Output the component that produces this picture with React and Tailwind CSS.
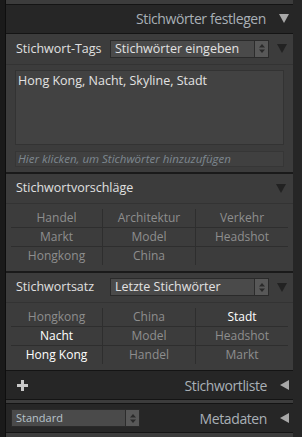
import React from "react";

const font = { fontFamily: '"Open Sans", "Noto Sans", Arial, sans-serif' };

const DownTri = ({ color = "#1c1c1c" }) => (
  <svg width="10" height="9" viewBox="0 0 10 9">
    <polygon points="0,0 10,0 5,9" fill={color} />
  </svg>
);

const LeftTri = () => (
  <svg width="9" height="10" viewBox="0 0 9 10">
    <polygon points="9,0 9,10 0,5" fill="#a8a8a8" />
  </svg>
);

const Spinner = () => (
  <div className="w-[14px] h-full bg-[#585858] border-l border-[#2c2c2c] flex items-center justify-center">
    <svg width="6" height="9" viewBox="0 0 6 9">
      <polygon points="0,3.5 6,3.5 3,0" fill="#2a2a2a" />
      <polygon points="0,5.5 6,5.5 3,9" fill="#2a2a2a" />
    </svg>
  </div>
);

const Select = ({ label, w = "w-[159px]", small }) => (
  <div className={`${w} h-[18px] flex bg-[#4a4a4a] border border-[#2a2a2a]`}>
    <div className={`flex-1 flex items-center pl-[4px] ${small ? "text-[11px] text-[#b8c4cc]" : "text-[12.5px] text-[#e2e2e2]"}`}>
      {label}
    </div>
    <Spinner />
  </div>
);

const Grid = ({ items }) => (
  <div className="mx-[5px] grid grid-cols-[92px_93px_92px] mt-[5px]">
    {items.map((it, i) => {
      const col = i % 3;
      const row = Math.floor(i / 3);
      return (
        <div
          key={i}
          className={`flex items-center justify-center text-[12px] ${
            col < 2 ? "border-r border-[#2e2e2e]" : ""
          } ${row < 2 ? "h-[19px] border-b border-[#2e2e2e]" : "h-[18px]"} ${
            it.hi ? "text-white" : "text-[#8e8e8e]"
          }`}
        >
          {it.t}
        </div>
      );
    })}
  </div>
);

const sug = [
  { t: "Handel" }, { t: "Architektur" }, { t: "Verkehr" },
  { t: "Markt" }, { t: "Model" }, { t: "Headshot" },
  { t: "Hongkong" }, { t: "China" }, { t: "" },
];

const satz = [
  { t: "Hongkong" }, { t: "China" }, { t: "Stadt", hi: true },
  { t: "Nacht", hi: true }, { t: "Model" }, { t: "Headshot" },
  { t: "Hong Kong", hi: true }, { t: "Handel" }, { t: "Markt" },
];

export default function App() {
  return (
    <div className="w-[302px] h-[437px] overflow-hidden bg-[#262626] flex" style={font}>
      <div className="w-[6px] bg-[#1a1a1a] border-r border-[#0e0e0e]"></div>
      <div className="w-[287px] flex flex-col">
        <div className="h-[5px] bg-[#3c3c3c] border-b border-[#141414]"></div>
        <div className="h-[28px] flex items-center justify-end pr-[4px] gap-[13px]">
          <span className="text-[14px] tracking-[-0.4px] text-[#a9b0b6]">Stichwörter festlegen</span>
          <DownTri color="#a8a8a8" />
        </div>
        <div className="h-[339px] bg-[#3c3c3c] border-t border-b border-[#141414] flex flex-col">
          <div className="h-[31px] flex items-center pl-[10px] border-b border-[#333333]">
            <span className="w-[94px] text-[12.5px] text-[#e0e0e0]">Stichwort-Tags</span>
            <Select label="Stichwörter eingeben" />
            <div className="ml-[8px]"><DownTri color="#222222" /></div>
          </div>
          <div className="mx-[9px] mt-[5px] h-[75px] bg-[#424242] border border-[#333333] px-[2px] pt-[1px] text-[12.5px] text-[#e2e2e2]">
            Hong Kong, Nacht, Skyline, Stadt
          </div>
          <div className="mx-[9px] mt-[6px] h-[16px] bg-[#404040] border border-[#363636] flex items-center px-[2px] text-[11.5px] italic text-[#7e8890]">
            Hier klicken, um Stichwörter hinzuzufügen
          </div>
          <div className="mt-[5px] h-[2px] bg-[#1a1a1a]"></div>
          <div className="h-[30px] flex items-center justify-between pl-[10px] pr-[7px] border-b border-[#333333]">
            <span className="text-[12.5px] text-[#e0e0e0]">Stichwortvorschläge</span>
            <DownTri color="#222222" />
          </div>
          <Grid items={sug} />
          <div className="mt-[6px] h-[2px] bg-[#1a1a1a]"></div>
          <div className="h-[30px] flex items-center pl-[10px] border-b border-[#333333]">
            <span className="w-[94px] text-[12.5px] text-[#e0e0e0]">Stichwortsatz</span>
            <Select label="Letzte Stichwörter" />
            <div className="ml-[8px]"><DownTri color="#222222" /></div>
          </div>
          <Grid items={satz} />
        </div>
        <div className="h-[28px] flex items-center justify-between pl-[11px] pr-[4px]">
          <svg width="11" height="11" viewBox="0 0 11 11">
            <rect x="4" y="0" width="3" height="11" fill="#c8c8c8" />
            <rect x="0" y="4" width="11" height="3" fill="#c8c8c8" />
          </svg>
          <div className="flex items-center gap-[13px]">
            <span className="text-[14px] tracking-[-0.4px] text-[#a9b0b6]">Stichwortliste</span>
            <LeftTri />
          </div>
        </div>
        <div className="h-[5px] bg-[#3c3c3c] border-t border-b border-[#141414]"></div>
        <div className="h-[28px] flex items-center justify-between pl-[5px] pr-[4px]">
          <Select label="Standard" w="w-[129px]" small />
          <div className="flex items-center gap-[13px]">
            <span className="text-[14px] tracking-[-0.4px] text-[#a9b0b6]">Metadaten</span>
            <LeftTri />
          </div>
        </div>
        <div className="h-[5px] bg-[#3c3c3c] border-t border-[#141414]"></div>
      </div>
      <div className="flex-1 bg-[#262626]"></div>
    </div>
  );
}
